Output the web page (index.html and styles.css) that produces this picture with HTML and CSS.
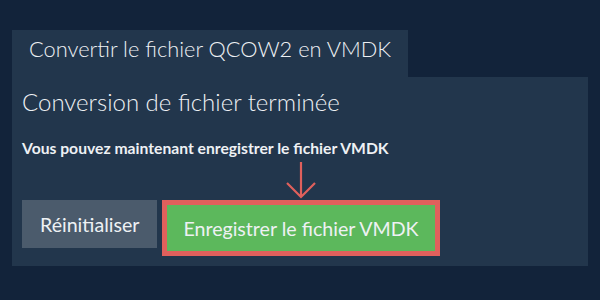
FILE: index.html
```html
<!DOCTYPE html>
<html lang="fr">
<head>
  <meta charset="UTF-8">
  <title>Convertir le fichier QCOW2 en VMDK</title>
  <link rel="stylesheet" href="styles.css">
</head>
<body>
  <div class="page">
    <div class="tab">Convertir le fichier QCOW2 en VMDK</div>
    <div class="panel">
      <div class="heading">Conversion de fichier terminée</div>
      <div class="message">Vous pouvez maintenant enregistrer le fichier VMDK</div>
      <div class="actions">
        <button class="btn btn-reset">Réinitialiser</button>
        <div class="save-wrap">
          <svg class="arrow" width="32" height="38" viewBox="0 0 32 38">
            <path d="M16 0 V35 M2 21 L16 35 L30 21" fill="none" stroke="#e0605c" stroke-width="2.2"/>
          </svg>
          <button class="btn btn-save">Enregistrer le fichier VMDK</button>
        </div>
      </div>
    </div>
  </div>
</body>
</html>
```

FILE: styles.css
```css
body {
  margin: 0;
  background-color: #12233a;
  color: #eef1f4;
  font-family: Lato, "Open Sans", Arial, sans-serif;
}
.page {
  padding: 30px 12px;
}
.tab {
  display: inline-block;
  background-color: #22364c;
  font-size: 21.8px;
  font-weight: 300;
  line-height: 26px;
  height: 26px;
  padding: 6px 17px 15px;
  vertical-align: top;
}
.panel {
  background-color: #22364c;
  padding: 10px 10px 10px;
}
.heading {
  font-size: 24px;
  font-weight: 300;
  line-height: 30px;
}
.message {
  margin-top: 22px;
  font-size: 15.7px;
  font-weight: 700;
  line-height: 19px;
}
.actions {
  display: flex;
  align-items: flex-start;
  gap: 5px;
  margin-top: 42px;
}
.btn {
  border: 0;
  margin: 0;
  font-family: Lato, "Open Sans", Arial, sans-serif;
  font-size: 19.6px;
  color: #eef1f4;
  cursor: pointer;
}
.btn-reset {
  background-color: #4b5b6c;
  height: 48px;
  padding: 0 18px;
}
.save-wrap {
  position: relative;
}
.btn-save {
  background-color: #5cb85c;
  border: 5px solid #e0605c;
  height: 56px;
  padding: 0 16px;
}
.arrow {
  position: absolute;
  left: 123px;
  top: -38px;
}
```
